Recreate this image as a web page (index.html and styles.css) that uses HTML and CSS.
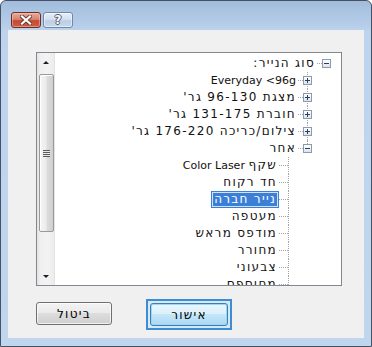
FILE: index.html
```html
<!DOCTYPE html>
<html lang="he">
<head>
<meta charset="utf-8">
<link rel="stylesheet" href="styles.css">
</head>
<body>
<div class="window">
  <div class="titlebar">
    <div class="tbtn close">
      <svg width="12" height="10" viewBox="0 0 12 10"><path d="M2 1.5 L10 8.5 M10 1.5 L2 8.5" stroke="#6a3a32" stroke-width="4" stroke-linecap="square"/><path d="M2 1.5 L10 8.5 M10 1.5 L2 8.5" stroke="#fff" stroke-width="2.2" stroke-linecap="square"/></svg>
    </div>
    <div class="tbtn help"><span class="q">?</span></div>
  </div>
  <div class="client">
    <div class="treebox">
      <div class="scrollbar">
        <div class="sarrow"><span class="tri up"></span></div>
        <div class="track">
          <div class="thumb"><span class="grip"></span></div>
        </div>
        <div class="sarrow down-wrap"><span class="tri down"></span></div>
      </div>
      <div class="tree" dir="rtl">
        <div class="row l0"><span class="gut"><span class="exp minus"></span></span><span class="lbl he">סוג הנייר:</span></div>
        <div class="row l1"><span class="gut"><span class="exp plus"></span></span><span class="lbl">Everyday &lt;96g</span></div>
        <div class="row l1"><span class="gut"><span class="exp plus"></span></span><span class="lbl he">מצגת 96-130 גר'</span></div>
        <div class="row l1"><span class="gut"><span class="exp plus"></span></span><span class="lbl he">חוברת 131-175 גר'</span></div>
        <div class="row l1"><span class="gut"><span class="exp plus"></span></span><span class="lbl he">צילום/כריכה 176-220 גר'</span></div>
        <div class="row l1 last"><span class="gut"><span class="exp minus"></span></span><span class="lbl he">אחר</span></div>
        <div class="row l2"><span class="gut"></span><span class="lbl"><span class="he">שקף</span> Color Laser</span></div>
        <div class="row l2"><span class="gut"></span><span class="lbl he">חד רקוח</span></div>
        <div class="row l2"><span class="gut"></span><span class="lbl he sel">נייר חברה</span></div>
        <div class="row l2"><span class="gut"></span><span class="lbl he">מעטפה</span></div>
        <div class="row l2"><span class="gut"></span><span class="lbl he">מודפס מראש</span></div>
        <div class="row l2"><span class="gut"></span><span class="lbl he">מחורר</span></div>
        <div class="row l2"><span class="gut"></span><span class="lbl he">צבעוני</span></div>
        <div class="row l2"><span class="gut"></span><span class="lbl he">מחוספס</span></div>
      </div>
    </div>
    <div class="buttons">
      <button class="btn cancel"><span class="he">ביטול</span></button>
      <div class="callout"><button class="btn ok"><span class="he">אישור</span></button></div>
    </div>
  </div>
</div>
</body>
</html>
```
FILE: styles.css
```css
* { box-sizing: border-box; }
html, body { margin: 0; padding: 0; }
body {
  width: 372px;
  height: 347px;
  overflow: hidden;
  background: #fff;
  font-family: "DejaVu Sans", "Liberation Sans", sans-serif;
  font-size: 11px;
}
.window {
  width: 372px;
  height: 347px;
  border: 1px solid #465264;
  border-radius: 6px 6px 0 0;
  background: linear-gradient(to bottom, #a2bcdc 0px, #abc5e3 12px, #b8cfea 26px, #bed4ee 32px, #c0d6ef 100%);
  padding: 0 7px 8px 7px;
  display: flex;
  flex-direction: column;
}
.titlebar {
  height: 29px;
  flex: none;
  display: flex;
  align-items: flex-start;
  padding: 11px 0 0 3px;
  gap: 2px;
}
.tbtn {
  width: 30px;
  height: 16px;
  border-radius: 3px;
  display: flex;
  align-items: center;
  justify-content: center;
}
.close {
  border: 1px solid #6e2e24;
  background: linear-gradient(to bottom, #e6a999 0%, #d98470 45%, #c34a34 55%, #cc5e45 100%);
  box-shadow: inset 0 0 0 1px rgba(255, 210, 200, 0.45);
}
.help {
  border: 1px solid #7088a8;
  background: linear-gradient(to bottom, #e6eef8 0%, #d3e1f1 45%, #bccee6 55%, #c8d8ec 100%);
  box-shadow: inset 0 0 0 1px rgba(255, 255, 255, 0.5);
}
.q {
  font: bold 12px "DejaVu Sans", sans-serif;
  color: #fff;
  line-height: 12px;
  text-shadow: 1px 0 0 #556, -1px 0 0 #556, 0 1px 0 #556, 0 -1px 0 #556;
}
.client {
  flex: 1;
  background: #f0f0f0;
  display: flex;
  flex-direction: column;
}
.treebox {
  margin: 22px 0 0 28px;
  width: 306px;
  height: 234px;
  border: 1px solid #828790;
  background: #fff;
  display: flex;
  flex: none;
}
.scrollbar {
  width: 18px;
  flex: none;
  display: flex;
  flex-direction: column;
  background: linear-gradient(to right, #e2e2e2 0px, #efefef 3px, #f3f3f3 10px, #ececec 100%);
  border-right: 1px solid #e4e4e4;
}
.sarrow {
  height: 19px;
  flex: none;
  display: flex;
  align-items: center;
  justify-content: center;
}
.down-wrap { height: 17px; }
.tri {
  width: 0;
  height: 0;
  border-left: 3px solid transparent;
  border-right: 3px solid transparent;
}
.tri.up { border-bottom: 3px solid #1e1e1e; }
.tri.down { border-top: 3px solid #1e1e1e; }
.track {
  flex: 1;
  padding: 2px 0 0 2px;
}
.thumb {
  width: 15px;
  height: 158px;
  border: 1px solid #9a9a9a;
  border-radius: 2px;
  background: linear-gradient(to right, #f5f5f5 0%, #ececec 45%, #dcdcdc 55%, #cfcfcf 100%);
  box-shadow: inset 1px 1px 0 #fff;
  display: flex;
  align-items: center;
  justify-content: center;
}
.grip {
  width: 7px;
  height: 7px;
  background: repeating-linear-gradient(to bottom, #5c5c5c 0px, #5c5c5c 1px, #e8e8e8 1px, #e8e8e8 2px);
}
.tree {
  flex: 1;
  direction: rtl;
  padding-top: 2px;
  overflow: hidden;
  color: #111;
}
.row {
  height: 17px;
  display: flex;
  align-items: center;
  white-space: nowrap;
}
.l0 { padding-right: 5px; }
.l1 { padding-right: 24px; }
.l2 { padding-right: 43px; }
.gut {
  width: 19px;
  height: 17px;
  flex: none;
  position: relative;
}
.gut::after {
  content: "";
  position: absolute;
  left: 0;
  width: 9px;
  top: 8px;
  border-top: 1px dotted #a4a4a4;
}
.l1 .gut::before,
.l2 .gut::before {
  content: "";
  position: absolute;
  left: 9px;
  top: 0;
  bottom: 0;
  border-left: 1px dotted #a4a4a4;
}
.last .gut::before { bottom: 9px; }
.exp {
  position: absolute;
  left: 5px;
  top: 4px;
  width: 9px;
  height: 9px;
  border: 1px solid #8d9aab;
  background: linear-gradient(to bottom, #ffffff, #dfe4ea);
  z-index: 1;
}
.exp::before {
  content: "";
  position: absolute;
  left: 1px;
  top: 3px;
  width: 5px;
  height: 1px;
  background: #24406e;
}
.exp.plus::after {
  content: "";
  position: absolute;
  left: 3px;
  top: 1px;
  width: 1px;
  height: 5px;
  background: #24406e;
}
.lbl {
  padding: 0 1px;
  height: 17px;
  line-height: 15px;
  border: 1px solid transparent;
}
.he {
  font-size: 12px;
  letter-spacing: 1.3px;
}
.lbl.sel {
  background: #3c7fd7;
  color: #fff;
  border-color: #3c7fd7;
  box-shadow: inset 0 0 0 1px #d3e3f6;
  padding: 0 2px;
}
.buttons {
  display: flex;
  align-items: flex-start;
  margin: 13px 0 0 28px;
  gap: 34px;
}
.btn {
  font-family: "DejaVu Sans", "Liberation Sans", sans-serif;
  font-size: 11px;
  color: #000;
  height: 23px;
  padding: 0;
  border: 1px solid #707070;
  border-radius: 3px;
  background: linear-gradient(to bottom, #f3f3f3 0%, #ebebeb 45%, #dddddd 50%, #cfcfcf 100%);
  box-shadow: inset 0 0 0 1px rgba(255, 255, 255, 0.7);
}
.cancel {
  width: 76px;
  margin-top: 3px;
}
.callout {
  border: 2px solid #3c8cd6;
  padding: 2px;
  background: #d5e9f8;
}
.ok {
  width: 78px;
  display: block;
  border-color: #3c7fb1;
  background: linear-gradient(to bottom, #eaf6fd 0%, #dcf1fc 45%, #c4e6f9 50%, #abd9f4 100%);
  box-shadow: inset 0 0 0 1px #9cd6f5;
}
```
